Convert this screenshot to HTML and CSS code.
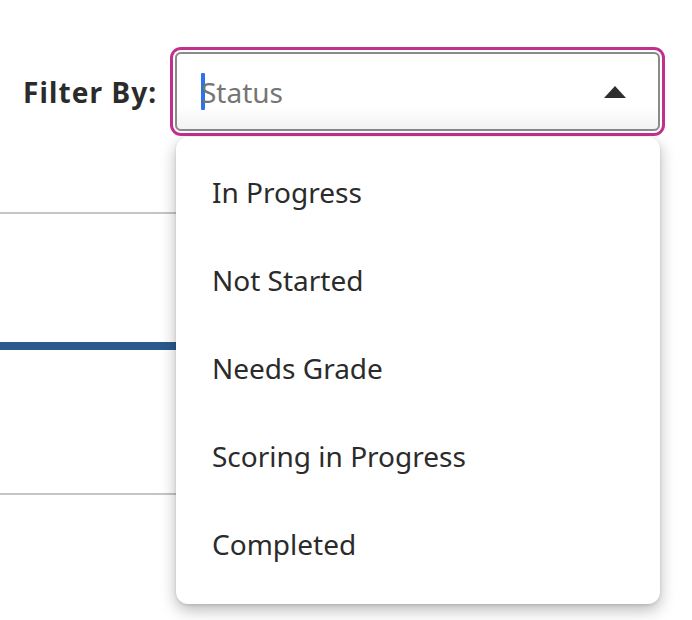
FILE: index.html
```html
<!DOCTYPE html>
<html>
<head>
<meta charset="utf-8">
<link rel="stylesheet" href="styles.css">
</head>
<body>
<div class="page">
  <div class="filter-bar">
    <span class="filter-label">Filter By:</span>
    <div class="select-wrap">
      <div class="select">
        <span class="caret"></span><span class="placeholder">Status</span>
        <svg class="arrow" width="22" height="12" viewBox="0 0 22 12"><path d="M0 12 L11 0 L22 12 Z" fill="#2e2e2e"/></svg>
      </div>
      <ul class="menu">
        <li class="menu-item">In Progress</li>
        <li class="menu-item">Not Started</li>
        <li class="menu-item">Needs Grade</li>
        <li class="menu-item">Scoring in Progress</li>
        <li class="menu-item">Completed</li>
      </ul>
    </div>
  </div>
  <div class="content">
    <div class="rule rule-top"></div>
    <div class="rule rule-blue"></div>
    <div class="rule rule-bottom"></div>
  </div>
</div>
</body>
</html>
```
FILE: styles.css
```css
html, body {
  margin: 0;
  padding: 0;
  background: #ffffff;
}
body {
  font-family: "Noto Sans", "Open Sans", sans-serif;
  color: #2b2b2b;
}
.page {
  width: 692px;
  height: 620px;
  overflow: hidden;
  position: relative;
}
.filter-bar {
  display: flex;
  align-items: center;
  padding-top: 52px;
  padding-left: 23px;
}
.filter-label {
  font-weight: 700;
  font-size: 28px;
  letter-spacing: 1.1px;
  color: #2b2b2b;
  width: 152px;
  white-space: nowrap;
}
.select-wrap {
  position: relative;
}
.select {
  box-sizing: border-box;
  width: 485px;
  height: 79px;
  border: 2px solid #8a8a8a;
  border-radius: 6px;
  box-shadow: 0 0 0 2px #ffffff, 0 0 0 5px #c2308e;
  background: linear-gradient(to bottom, #ffffff 70%, #f3f3f3 100%);
  display: flex;
  align-items: center;
  padding-left: 24px;
  padding-right: 32px;
}
.caret {
  width: 4px;
  height: 37px;
  background: #2f72f0;
  border-radius: 1px;
  margin-right: -4px;
}
.placeholder {
  font-size: 28px;
  color: #757575;
  flex: 1;
}
.arrow {
  display: block;
}
.menu {
  position: absolute;
  left: 1px;
  top: 85px;
  width: 484px;
  box-sizing: border-box;
  margin: 0;
  padding: 11px 0 16px 0;
  list-style: none;
  background: #ffffff;
  border-radius: 12px;
  box-shadow: 0 6px 16px rgba(0, 0, 0, 0.28), 0 1px 3px rgba(0, 0, 0, 0.12);
}
.menu-item {
  height: 88px;
  display: flex;
  align-items: center;
  padding-left: 36px;
  font-size: 28px;
  color: #2b2b2b;
}
.content {
  padding-top: 81px;
  width: 400px;
}
.rule {
  width: 100%;
}
.rule-top {
  height: 2px;
  background: #c3c6c9;
}
.rule-blue {
  height: 8px;
  margin-top: 128px;
  background: #2a5a8e;
}
.rule-bottom {
  height: 2px;
  margin-top: 143px;
  background: #c3c6c9;
}
```
